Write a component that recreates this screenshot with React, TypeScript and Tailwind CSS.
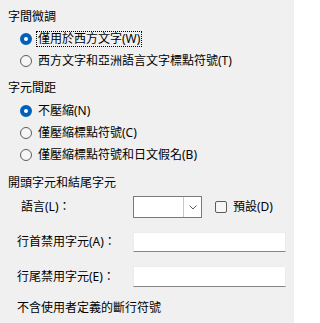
import React from "react";

const font = { fontFamily: '"Noto Sans", "Noto Sans CJK TC", sans-serif' };

function Radio({ checked }: { checked?: boolean }) {
  return checked ? (
    <span className="box-border w-[12px] h-[12px] rounded-full border-[4px] border-[#005fb8] bg-white shrink-0" />
  ) : (
    <span className="box-border w-[12px] h-[12px] rounded-full border border-[#5c5c5c] bg-[#f6f6f6] shrink-0" />
  );
}

function RadioRow({ label, checked, focus, h = "h-[22px]" }: { label: string; checked?: boolean; focus?: boolean; h?: string }) {
  return (
    <div className={`flex items-center pl-[20px] ${h}`}>
      <Radio checked={checked} />
      <span className={`ml-[4px] px-[1px] leading-[14px] ${focus ? "border border-dotted border-black" : "border border-transparent"}`}>
        {label}
      </span>
    </div>
  );
}

export default function App() {
  return (
    <div className="w-[294px] h-[323px] bg-[#f0f0f0] text-[12px] text-black overflow-hidden" style={font}>
      <div className="flex flex-col pt-[9px]">
        <div className="h-[16px] flex items-center pl-[8px] leading-[16px]">字間微調</div>
        <div className="h-[2px]" />
        <RadioRow label="僅用於西方文字(W)" checked focus h="h-[23px]" />
        <RadioRow label="西方文字和亞洲語言文字標點符號(T)" />
        <div className="h-[8px]" />
        <div className="h-[16px] flex items-center pl-[8px] leading-[16px]">字元間距</div>
        <div className="h-[4px]" />
        <RadioRow label="不壓縮(N)" checked />
        <RadioRow label="僅壓縮標點符號(C)" />
        <RadioRow label="僅壓縮標點符號和日文假名(B)" />
        <div className="h-[9px]" />
        <div className="h-[16px] flex items-center pl-[8px] leading-[16px]">開頭字元和結尾字元</div>
        <div className="h-[5px]" />
        <div className="h-[22px] flex items-center">
          <span className="w-[133px] pl-[21px] leading-[16px]">語言(L)：</span>
          <div className="box-border w-[69px] h-[22px] border border-[#7a7a7a] bg-white flex">
            <div className="flex-1" />
            <div className="w-[18px] border-l border-[#c8c8c8] flex items-center justify-center">
              <svg width="8" height="5" viewBox="0 0 8 5" fill="none">
                <path d="M0.5 0.5 L4 4 L7.5 0.5" stroke="#606060" strokeWidth="1" />
              </svg>
            </div>
          </div>
          <span className="ml-[13px] box-border w-[12px] h-[12px] rounded-[2px] border border-[#5c5c5c] bg-[#f6f6f6]" />
          <span className="ml-[6px] leading-[16px]">預設(D)</span>
        </div>
        <div className="h-[14px]" />
        <div className="h-[20px] flex items-center">
          <span className="w-[133px] pl-[17px] leading-[16px]">行首禁用字元(A)：</span>
          <div className="box-border w-[153px] h-[20px] bg-white border border-[#ececec] border-b-[#868686]" />
        </div>
        <div className="h-[14px]" />
        <div className="h-[21px] flex items-center">
          <span className="w-[133px] pl-[17px] leading-[16px]">行尾禁用字元(E)：</span>
          <div className="box-border w-[153px] h-[21px] bg-white border border-[#ececec] border-b-[#868686]" />
        </div>
        <div className="h-[13px]" />
        <div className="h-[16px] flex items-center pl-[17px] leading-[16px]">不含使用者定義的斷行符號</div>
      </div>
    </div>
  );
}
